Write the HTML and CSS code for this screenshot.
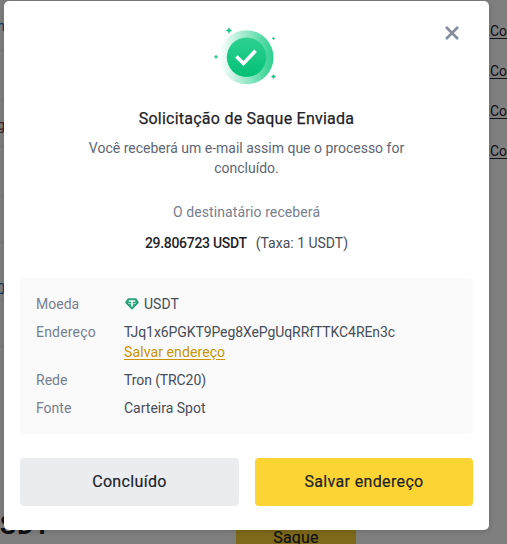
FILE: index.html
```html
<!DOCTYPE html>
<html lang="pt">
<head>
<meta charset="utf-8">
<title>Saque</title>
<link rel="stylesheet" href="styles.css">
</head>
<body>
<div class="page">
  <div class="columns">
    <div class="history">
      <div class="cell c1"><span class="link">m</span></div>
      <div class="cell c2"></div>
      <div class="cell c3"><span class="mark">g</span></div>
      <div class="cell c4"></div>
      <div class="cell c5"></div>
      <div class="cell c6"><span class="zero">0</span></div>
      <div class="cell c7"></div>
    </div>
    <div class="faq"><a>Co</a><a>Co</a><a>Co</a><a>Co</a></div>
  </div>
  <div class="summary">
    <div class="total">SDT</div>
    <div class="withdraw">Saque</div>
  </div>
</div>
<div class="overlay">
  <main class="modal">
    <svg class="close" viewBox="0 0 16 16"><path d="M2 2l12 12M14 2L2 14" fill="none" stroke="#848e9c" stroke-width="2.7"/></svg>
    <svg class="success" viewBox="0 0 90 80">
      <defs>
        <linearGradient id="halo" x1="0" x2="1"><stop offset="0" stop-color="#2ed191" stop-opacity="0"/><stop offset="1" stop-color="#2bd08f"/></linearGradient>
        <linearGradient id="disc" x1="0" y1="0" x2="0" y2="1"><stop offset="0" stop-color="#2ed191"/><stop offset="1" stop-color="#02c076"/></linearGradient>
      </defs>
      <circle cx="46.5" cy="42.3" r="27" fill="url(#halo)"/>
      <circle cx="46.5" cy="42.3" r="19.7" fill="url(#disc)"/>
      <path d="M36.4 41.5l7 7L55.6 35.8" fill="none" stroke="#fff" stroke-width="3.6"/>
      <g fill="#16c784" stroke="#16c784" stroke-width=".4">
        <path d="M29 12.7l1 1.8 1.8 1-1.8 1-1 1.8-1-1.8-1.8-1 1.8-1z"/>
        <path d="M16 40l.7 1.2 1.2.7-1.2.7-.7 1.2-.7-1.2-1.2-.7 1.2-.7z"/>
        <path d="M73.5 59.4l.8 1.4 1.4.8-1.4.8-.8 1.4-.8-1.4-1.4-.8 1.4-.8z"/>
        <path d="M73.5 22.1l.5.9.9.5-.9.5-.5.9-.5-.9-.9-.5.9-.5z"/>
      </g>
    </svg>
    <h1>Solicitação de Saque Enviada</h1>
    <p class="message"><span>Você receberá um e-mail assim que o processo for</span><br><span>concluído.</span></p>
    <p class="label">O destinatário receberá</p>
    <p class="amount"><strong>29.806723 USDT</strong><span class="fee">(Taxa: 1 USDT)</span></p>
    <dl class="details">
      <dt>Moeda</dt>
      <dd class="coin"><svg viewBox="0 0 16 14"><path d="M3.8 1.2h8.4L15 5.8 8 12.8 1 5.8z" fill="#26a17b"/><path d="M4.8 3.9h6.4M8 3.9v5.8" stroke="#fff" stroke-width="1.5" fill="none"/><path d="M4 6.3q4 1.8 8 0" fill="none" stroke="#fff" stroke-width=".6"/></svg><span>USDT</span></dd>
      <dt class="address-label">Endereço</dt>
      <dd><span class="address">TJq1x6PGKT9Peg8XePgUqRRfTTKC4REn3c</span><br><a class="save">Salvar endereço</a></dd>
      <dt>Rede</dt>
      <dd class="network">Tron (TRC20)</dd>
      <dt>Fonte</dt>
      <dd>Carteira Spot</dd>
    </dl>
    <div class="actions">
      <button>Concluído</button>
      <button class="primary">Salvar endereço</button>
    </div>
  </main>
</div>
</body>
</html>
```
FILE: styles.css
```css
* { box-sizing: border-box; }
body {
  margin: 0;
  height: 544px;
  overflow: hidden;
  background: #fff;
  color: #1e2329;
  font-family: Roboto, "Liberation Sans", sans-serif;
  font-size: 14px;
  line-height: 20px;
}
.page { height: 544px; overflow: hidden; }
.columns { display: flex; justify-content: space-between; height: 505px; }
.history { width: 12px; }
.cell { height: 49px; border-bottom: 1px solid #eaecef; overflow: hidden; direction: rtl; width: 5px; }
.c1 { height: 51px; padding-top: 16px; }
.c3 { height: 47px; padding-top: 15px; }
.c5 { height: 47px; }
.c6 { height: 57px; padding-top: 36px; }
.c7 { height: 47px; }
.link, .zero { color: #1565a8; }
.mark { color: #8b3535; }
.faq { width: 17px; padding-top: 21px; display: flex; flex-direction: column; gap: 20px; }
.faq a { text-decoration: underline; text-underline-offset: 2px; }
.summary { display: flex; }
.total { width: 236px; font-size: 26px; font-weight: 700; line-height: 40px; letter-spacing: 1px; }
.withdraw { width: 120px; height: 60px; background: #fcd535; text-align: center; font-size: 16px; line-height: 20px; padding-top: 23px; letter-spacing: .2px; -webkit-text-stroke: .2px currentColor; }
.overlay { position: absolute; inset: 0; background: rgba(0, 0, 0, .5); padding: 1px 0 0 4px; }
.modal { position: relative; width: 485px; height: 529px; padding: 14px 16px 24px; border-radius: 5px; background: #fff; display: flex; flex-direction: column; box-shadow: 0 1px 6px rgba(0, 0, 0, .18); }
.close { position: absolute; left: 440px; top: 24px; width: 16px; height: 16px; }
.success { width: 90px; height: 80px; margin-left: 180px; flex: none; }
h1 { margin: 13px 0 0; font-size: 16px; line-height: 22px; font-weight: 400; text-align: center; letter-spacing: .24px; -webkit-text-stroke: .25px currentColor; }
p { margin: 0; text-align: center; }
.message { margin-top: 8px; color: #5e6673; }
.label { margin-top: 24px; color: #76808f; letter-spacing: .1px; }
.amount { margin-top: 11px; display: flex; justify-content: center; gap: 9px; color: #474d57; }
.amount strong { font-weight: 500; letter-spacing: -.3px; color: #1e2329; }
.fee { color: #474d57; }
.details { margin: 25px 0 24px; height: 156px; padding: 16px; display: grid; grid-template-columns: 88px 1fr; grid-template-rows: 20px 40px 20px 20px; row-gap: 8px; border-radius: 4px; background: #fafafa; color: #474d57; }
dt { color: #76808f; }
dd { margin: 0; }
.address-label { letter-spacing: .2px; }
.address { letter-spacing: -.09px; }
.network { letter-spacing: -.1px; }
.coin { display: flex; align-items: center; gap: 4px; }
.coin svg { width: 16px; height: 14px; }
.save { color: #c99400; letter-spacing: .1px; text-decoration: underline; text-underline-offset: 2px; }
.actions { display: grid; grid-template-columns: 219px 218px; gap: 16px; }
button { height: 48px; border: 0; border-radius: 4px; padding: 0; background: #eaecef; color: #1e2329; font: 400 16px/24px Roboto, "Liberation Sans", sans-serif; letter-spacing: .35px; -webkit-text-stroke: .2px currentColor; }
.primary { background: #fcd535; }
```
